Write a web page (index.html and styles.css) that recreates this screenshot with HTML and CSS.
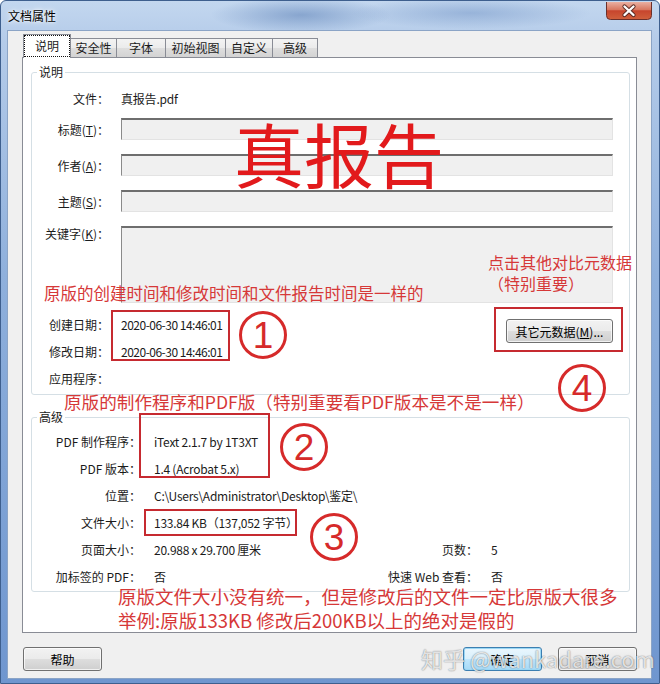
FILE: index.html
```html
<!DOCTYPE html>
<html lang="zh-CN">
<head>
    <meta charset="UTF-8">
    <meta name="viewport" content="width=device-width, initial-scale=1.0">
    <title>文档属性</title>
    <link rel="stylesheet" href="styles.css">
</head>
<body>

<div class="window">
    <div class="titlebar">
        <span class="title">文档属性</span>
        <div class="close-btn">
            <svg width="46" height="18" viewBox="0 0 46 18">
                <defs>
                    <linearGradient id="cg" x1="0" y1="0" x2="0" y2="1">
                        <stop offset="0" stop-color="#eab0a2"/>
                        <stop offset="0.45" stop-color="#d8765f"/>
                        <stop offset="0.5" stop-color="#c7452d"/>
                        <stop offset="1" stop-color="#d0603c"/>
                    </linearGradient>
                </defs>
                <path d="M0.5 0 V13.5 Q0.5 17.5 4.5 17.5 H41.5 Q45.5 17.5 45.5 13.5 V0" fill="url(#cg)" stroke="#6b2f2a"/>
                <path d="M18.5 4.5 L27.5 13 M27.5 4.5 L18.5 13" stroke="#5a2a24" stroke-width="4.2" stroke-linecap="round"/>
                <path d="M18.5 4.5 L27.5 13 M27.5 4.5 L18.5 13" stroke="#ffffff" stroke-width="2.4" stroke-linecap="round"/>
            </svg>
        </div>
    </div>

    <div class="client">
        <div class="tabs">
            <div class="tab active"><span class="focus">说明</span></div>
            <div class="tab tab-w46">安全性</div>
            <div class="tab tab-w49">字体</div>
            <div class="tab tab-w60">初始视图</div>
            <div class="tab tab-w47">自定义</div>
            <div class="tab tab-w45">高级</div>
        </div>

        <div class="panel">
            <fieldset class="group group-desc">
                <legend>说明</legend>
                <div class="row row-file">
                    <span class="lbl">文件：</span>
                    <span class="val">真报告.pdf</span>
                </div>
                <div class="row row-edit">
                    <span class="lbl">标题(<u>T</u>)：</span>
                    <span class="edit"></span>
                </div>
                <div class="row row-edit">
                    <span class="lbl">作者(<u>A</u>)：</span>
                    <span class="edit"></span>
                </div>
                <div class="row row-edit">
                    <span class="lbl">主题(<u>S</u>)：</span>
                    <span class="edit"></span>
                </div>
                <div class="row row-kw">
                    <span class="lbl">关键字(<u>K</u>)：</span>
                    <span class="edit edit-multi"></span>
                </div>
                <div class="meta">
                    <div class="dates">
                        <div class="row row-date">
                            <span class="lbl">创建日期：</span>
                            <span class="val val-date">2020-06-30 14:46:01</span>
                        </div>
                        <div class="row row-date">
                            <span class="lbl">修改日期：</span>
                            <span class="val val-date">2020-06-30 14:46:01</span>
                        </div>
                        <div class="row row-date">
                            <span class="lbl">应用程序：</span>
                            <span class="val"></span>
                        </div>
                    </div>
                    <button class="btn btn-meta">其它元数据(<u>M</u>)...</button>
                </div>
            </fieldset>

            <fieldset class="group group-adv">
                <legend>高级</legend>
                <div class="arow">
                    <span class="albl">PDF 制作程序：</span>
                    <span class="aval">iText 2.1.7 by 1T3XT</span>
                </div>
                <div class="arow">
                    <span class="albl">PDF 版本：</span>
                    <span class="aval">1.4 (Acrobat 5.x)</span>
                </div>
                <div class="arow">
                    <span class="albl">位置：</span>
                    <span class="aval">C:\Users\Administrator\Desktop\鉴定\</span>
                </div>
                <div class="arow">
                    <span class="albl">文件大小：</span>
                    <span class="aval">133.84 KB（137,052 字节）</span>
                </div>
                <div class="arow">
                    <span class="albl">页面大小：</span>
                    <span class="aval aval-fixed">20.988 x 29.700 厘米</span>
                    <span class="albl2">页数：</span>
                    <span class="aval">5</span>
                </div>
                <div class="arow">
                    <span class="albl">加标签的 PDF：</span>
                    <span class="aval aval-fixed">否</span>
                    <span class="albl2">快速 Web 查看：</span>
                    <span class="aval">否</span>
                </div>
            </fieldset>
        </div>

        <div class="buttons">
            <button class="btn">帮助</button>
            <button class="btn btn-default">确定</button>
            <button class="btn">取消</button>
        </div>
    </div>

    <!-- red annotations drawn on top of the screenshot -->
    <div class="note note-big">真报告</div>
    <div class="note note-meta">点击其他对比元数据<br>（特别重要）</div>
    <div class="note note-dates">原版的创建时间和修改时间和文件报告时间是一样的</div>
    <div class="note note-producer">原版的制作程序和PDF版（特别重要看PDF版本是不是一样）</div>
    <div class="note note-size">原版文件大小没有统一，但是修改后的文件一定比原版大很多<br>举例:原版133KB 修改后200KB以上的绝对是假的</div>

    <div class="mark mark-dates"></div>
    <div class="mark mark-meta"></div>
    <div class="mark mark-producer"></div>
    <div class="mark mark-size"></div>

    <svg class="circ circ-1" width="50" height="50" viewBox="0 0 50 50">
        <circle cx="25" cy="25" r="22.5" fill="none" stroke="#d62a2a" stroke-width="3"/>
        <text x="25" y="38" text-anchor="middle">1</text>
    </svg>
    <svg class="circ circ-2" width="50" height="50" viewBox="0 0 50 50">
        <circle cx="25" cy="25" r="22.5" fill="none" stroke="#d62a2a" stroke-width="3"/>
        <text x="25" y="38" text-anchor="middle">2</text>
    </svg>
    <svg class="circ circ-3" width="50" height="50" viewBox="0 0 50 50">
        <circle cx="25" cy="25" r="22.5" fill="none" stroke="#d62a2a" stroke-width="3"/>
        <text x="25" y="38" text-anchor="middle">3</text>
    </svg>
    <svg class="circ circ-4" width="50" height="50" viewBox="0 0 50 50">
        <circle cx="25" cy="25" r="22.5" fill="none" stroke="#d62a2a" stroke-width="3"/>
        <text x="25" y="38" text-anchor="middle">4</text>
    </svg>

    <div class="watermark">知乎 @wankadare.com</div>
</div>

</body>
</html>
```

FILE: styles.css
```css
* {
    box-sizing: border-box;
}
body {
    margin: 0;
    font-family: "Noto Sans CJK SC", "Open Sans", sans-serif;
    font-size: 12px;
    color: #1b1b1b;
    background: #ffffff;
}
.window {
    position: relative;
    width: 660px;
    height: 684px;
    display: flex;
    flex-direction: column;
    border-radius: 6px 6px 0 0;
    overflow: hidden;
    background:
        radial-gradient(ellipse 90px 18px at 300px 14px, rgba(70,110,170,0.45), rgba(70,110,170,0)),
        radial-gradient(ellipse 120px 16px at 470px 12px, rgba(80,120,180,0.35), rgba(80,120,180,0)),
        linear-gradient(180deg, #c3d7ef 0%, #b4cbe9 6%, #8fb0dc 40%, #6f96cf 100%);
    border: 1px solid #3e5f8e;
}

/* title bar */
.titlebar {
    height: 29px;
    display: flex;
    align-items: flex-start;
    padding: 0 7px 0 7px;
}
.title {
    line-height: 29px;
    color: #000;
    text-shadow: 0 0 6px #ffffff, 0 0 3px #ffffff;
}
.close-btn {
    margin-left: auto;
    margin-top: 1px;
    height: 18px;
}
.close-btn svg {
    display: block;
}

/* client area */
.client {
    flex: 1;
    margin: 0 7px 6px 6px;
    padding: 3px 14px 7px 14px;
    background: #f0f0f0;
    border: 1px solid #8ba4c6;
}
.tabs {
    display: flex;
    align-items: flex-end;
    height: 23px;
    padding-left: 1px;
}
.tab {
    height: 19px;
    line-height: 17px;
    text-align: center;
    border: 1px solid #898c95;
    border-bottom: none;
    margin-left: -1px;
    background: linear-gradient(180deg, #f3f3f3 0%, #ebebeb 50%, #dedede 51%, #d3d3d3 100%);
    white-space: nowrap;
}
.tab-w46 { width: 47px; }
.tab-w49 { width: 50px; }
.tab-w60 { width: 61px; }
.tab-w47 { width: 48px; }
.tab-w45 { width: 46px; }
.tab.active {
    width: 48px;
    height: 24px;
    margin-left: 0;
    margin-bottom: -1px;
    position: relative;
    z-index: 1;
    background: #ffffff;
    padding: 0;
}
.tab.active .focus {
    display: block;
    height: 22px;
    line-height: 20px;
    border: 1px dotted #111;
}

.panel {
    height: 576px;
    border: 1px solid #898c95;
    background: #ffffff;
    padding: 6px 6px 0 8px;
}

/* group boxes */
.group {
    margin: 0;
    min-width: 0;
    border: 1px solid #d5dfe5;
    border-radius: 3px;
}
.group legend {
    margin-left: 5px;
    padding: 0 2px;
    line-height: 16px;
}
.group-desc {
    padding: 0 16px 2px 0;
}
.group-adv {
    margin-top: 14px;
    padding: 3px 16px 1px 0;
}

.row {
    display: flex;
    align-items: center;
}
.lbl {
    width: 77px;
    flex-shrink: 0;
    text-align: right;
    white-space: nowrap;
}
.val {
    margin-left: 12px;
    white-space: nowrap;
    letter-spacing: -0.2px;
}
.val-date {
    letter-spacing: -0.5px;
}
.row-file {
    height: 20px;
    margin-top: 8px;
}
.row-edit {
    margin-top: 14px;
}
.row-file + .row-edit {
    margin-top: 10px;
}
.row-kw {
    margin-top: 14px;
    align-items: flex-start;
}
.row-kw .lbl {
    line-height: 16px;
}
.edit {
    display: block;
    flex: 1;
    margin-left: 12px;
    height: 22px;
    background: #f0f0f0;
    border: 1px solid #e3e3e3;
    border-top: 2px solid #6e6e6e;
    border-left: 1px solid #8a8a8a;
}
.edit-multi {
    height: 77px;
}

.meta {
    display: flex;
    justify-content: space-between;
    align-items: flex-start;
    margin-top: 8px;
}
.row-date {
    height: 27px;
}

/* advanced rows */
.arow {
    display: flex;
    align-items: center;
    height: 27px;
    white-space: nowrap;
}
.albl {
    width: 109px;
    flex-shrink: 0;
    text-align: right;
}
.aval {
    margin-left: 13px;
    letter-spacing: -0.25px;
}
.aval-fixed {
    width: 227px;
    flex-shrink: 0;
}
.albl2 {
    width: 97px;
    flex-shrink: 0;
    text-align: right;
}

/* buttons */
.btn {
    width: 79px;
    height: 24px;
    padding: 0;
    font: inherit;
    color: #000;
    border: 1px solid #707070;
    border-radius: 3px;
    background: linear-gradient(180deg, #f2f2f2 0%, #ebebeb 48%, #dddddd 52%, #cfcfcf 100%);
    box-shadow: inset 0 0 0 1px rgba(255,255,255,0.7);
}
.btn-meta {
    width: 107px;
    margin-top: 8px;
}
.btn-default {
    border-color: #3c7fb1;
    background: linear-gradient(180deg, #eaf6fd 0%, #d9f0fc 48%, #bee6fd 52%, #a7d9f5 100%);
    box-shadow: inset 0 0 0 1px #9ad7f4;
}
.buttons {
    display: flex;
    gap: 16px;
    margin-top: 14px;
    padding-left: 1px;
}
.buttons .btn-default {
    margin-left: auto;
}

/* annotations */
.note {
    position: absolute;
    color: #d63838;
    white-space: nowrap;
    font-size: 16.5px;
    line-height: 20px;
}
.note-big {
    left: 233px;
    top: 117px;
    font-size: 70px;
    line-height: 70px;
    color: #e21a1c;
}
.note-meta {
    left: 487px;
    top: 251px;
    font-size: 16px;
    line-height: 21px;
}
.note-dates {
    left: 43px;
    top: 282px;
}
.note-producer {
    left: 63px;
    top: 391px;
    font-size: 17.6px;
}
.note-size {
    left: 117px;
    top: 583px;
    font-size: 18.5px;
    line-height: 24px;
}

.mark {
    position: absolute;
    border: 2px solid #c62a30;
}
.mark-dates { left: 110px; top: 309px; width: 119px; height: 51px; }
.mark-meta { left: 493px; top: 306px; width: 129px; height: 45px; }
.mark-producer { left: 138px; top: 412px; width: 131px; height: 65px; }
.mark-size { left: 143px; top: 508px; width: 153px; height: 27px; }

.circ {
    position: absolute;
}
.circ text {
    font-family: "Liberation Sans", sans-serif;
    font-size: 37px;
    fill: #d62a2a;
}
.circ-1 { left: 237px; top: 309px; }
.circ-2 { left: 278px; top: 421px; }
.circ-3 { left: 308px; top: 511px; }
.circ-4 { left: 556px; top: 362px; }

.watermark {
    position: absolute;
    left: 420px;
    top: 644px;
    font-size: 22px;
    line-height: 26px;
    color: rgba(255,255,255,0.8);
    text-shadow: 0 0 1px rgba(0,0,0,0.45), 0 0 2px rgba(0,0,0,0.2);
    white-space: nowrap;
}
```
